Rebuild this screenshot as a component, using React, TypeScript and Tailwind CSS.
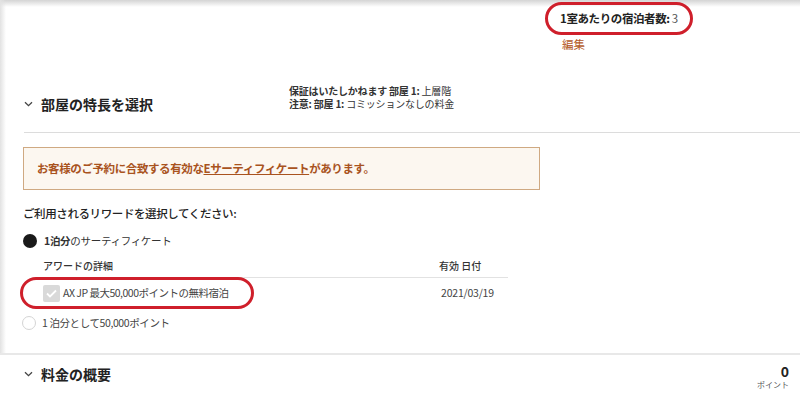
import React from "react";

const Chevron = () => (
  <svg width="9" height="6" viewBox="0 0 9 6" className="shrink-0">
    <path d="M1 1.2 L4.5 4.7 L8 1.2" fill="none" stroke="#444" strokeWidth="1.3" />
  </svg>
);

export default function App() {
  return (
    <div
      className="relative w-[800px] h-[395px] overflow-hidden bg-white text-[#222]"
      style={{ fontFamily: '"Noto Sans CJK JP", "Noto Sans", sans-serif' }}
    >
      {/* shadows */}
      <div className="absolute left-0 top-0 w-full h-[7px] bg-gradient-to-b from-[#d4d4d4] to-white/0" />
      <div className="absolute left-0 top-0 w-[6px] h-[354px] bg-gradient-to-r from-[#e2e2e2] to-white/0" />

      {/* top-right */}
      <div className="h-[80px] pl-[560px] pt-[9px]">
        <div className="text-[11.5px] leading-[18px] font-bold tracking-[-0.4px]">
          1室あたりの宿泊者数: <span className="font-normal text-[#555]">3</span>
        </div>
        <div className="mt-[8px] ml-[2px] text-[11.5px] leading-[18px] text-[#b35a28]">編集</div>
      </div>

      {/* section header */}
      <div className="ml-[24px] border-b border-[#dcdcdc] h-[53px] flex items-start">
        <div className="flex items-center gap-[8px] pt-[14px] w-[265px]">
          <Chevron />
          <span className="text-[14px] font-bold leading-[20px]">部屋の特長を選択</span>
        </div>
        <div className="text-[10px] leading-[13px] pt-[4px] text-[#333] tracking-[-0.2px]">
          <div><span className="font-bold">保証はいたしかねます 部屋 1:</span> 上層階</div>
          <div><span className="font-bold">注意: 部屋 1:</span> コミッションなしの料金</div>
        </div>
      </div>

      {/* content */}
      <div className="pl-[23px] pt-[14px]">
        <div className="w-[517px] h-[43px] border border-[#cfa982] bg-[#fcf7f0] flex items-center pl-[13px]">
          <span className="text-[11.5px] font-semibold text-[#a9531e] tracking-[-0.4px]">
            お客様のご予約に合致する有効な<span className="underline">Eサーティフィケート</span>があります。
          </span>
        </div>
        <div className="mt-[14px] text-[11.5px] font-medium leading-[18px] tracking-[-0.4px]">
          ご利用されるリワードを選択してください:
        </div>
        <div className="mt-[11px] flex items-center gap-[7px]">
          <span className="w-[14px] h-[14px] rounded-full bg-[#1a1a1a]" />
          <span className="text-[10.5px] leading-[16px] text-[#333] tracking-[-0.3px]">
            <span className="font-bold">1泊分</span>のサーティフィケート
          </span>
        </div>
        <div className="ml-[18px] w-[467px]">
          <div className="flex h-[29px] items-center border-b border-[#e2e2e2] text-[10px] font-medium text-[#333] pt-[4px]">
            <span className="w-[398px] pl-[2px]">アワードの詳細</span>
            <span>有効 日付</span>
          </div>
          <div className="flex items-center h-[30px] text-[10.5px] text-[#444]">
            <span className="ml-[2px] w-[17px] h-[17px] bg-[#d9d9d9] rounded-[2px] flex items-center justify-center">
              <svg width="11" height="9" viewBox="0 0 11 9">
                <path d="M1 4.5 L4 7.5 L10 1.5" fill="none" stroke="#fff" strokeWidth="1.8" />
              </svg>
            </span>
            <span className="ml-[3px] w-[378px] tracking-[-0.5px]">AX JP 最大50,000ポイントの無料宿泊</span>
            <span className="tracking-[-0.2px]">2021/03/19</span>
          </div>
        </div>
        <div className="mt-[7px] flex items-center gap-[6px]">
          <span className="ml-[-1px] w-[14px] h-[14px] rounded-full border border-[#d4d4d4] bg-white" />
          <span className="text-[10.5px] leading-[16px] text-[#444] tracking-[-0.4px]">1 泊分として50,000ポイント</span>
        </div>
      </div>

      {/* bottom section */}
      <div className="absolute left-0 top-[353px] w-full border-t-[2px] border-[#e8e8e8]">
        <div className="flex items-start justify-between pl-[24px] pr-[11px]">
          <div className="flex items-center gap-[8px] pt-[9px]">
            <Chevron />
            <span className="text-[14px] font-bold leading-[20px]">料金の概要</span>
          </div>
          <div className="flex flex-col items-end pt-[8px]">
            <span className="text-[14px] font-bold leading-[16px]">0</span>
            <span className="text-[8px] leading-[12px] text-[#555]">ポイント</span>
          </div>
        </div>
      </div>

      {/* red annotations */}
      <div className="absolute left-[545px] top-[2px] w-[148px] h-[33px] rounded-[17px] border-[3px] border-[#cf1f2b]" />
      <div className="absolute left-[20px] top-[277px] w-[234px] h-[32px] rounded-[16px] border-[3px] border-[#cf1f2b]" />
    </div>
  );
}
